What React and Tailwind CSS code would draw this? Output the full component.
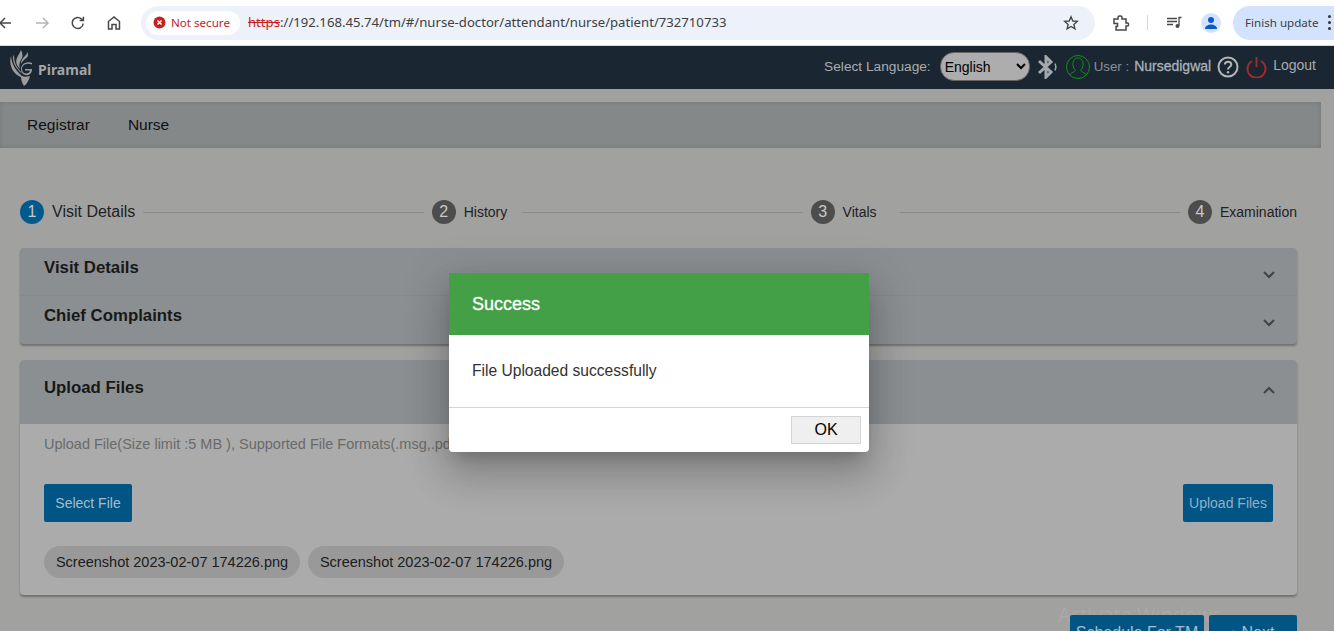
import React from "react";

const sans = "font-['Liberation_Sans',Arial,sans-serif]";

function Chevron({ up }) {
  return (
    <svg width="14" height="10" viewBox="0 0 14 10" fill="none" stroke="#424446" strokeWidth="2">
      <path d={up ? "M2 8l5-5 5 5" : "M2 2l5 5 5-5"} />
    </svg>
  );
}

function Step({ n, active, label, labelClass }) {
  return (
    <>
      <span className={`flex h-6 w-6 shrink-0 items-center justify-center rounded-full text-base text-[#c9c9c9] ${active ? "bg-[#005a8e]" : "bg-[#4d4d4d]"}`}>{n}</span>
      <span className={`ml-2 shrink-0 text-[#222] ${labelClass}`}>{label}</span>
    </>
  );
}

function Line({ className }) {
  return <span className={`h-px flex-1 bg-[#8a8a89] ${className}`} />;
}

function BrowserBar() {
  return (
    <div className="flex h-[45px] items-center bg-white">
      <svg className="ml-[-2px]" width="16" height="16" viewBox="0 0 16 16" fill="none" stroke="#474747" strokeWidth="1.5"><path d="M13 8H2M7 3L2 8l5 5" /></svg>
      <svg className="ml-[20px]" width="16" height="16" viewBox="0 0 16 16" fill="none" stroke="#b4b4b4" strokeWidth="1.5"><path d="M2 8h11M9 3l5 5-5 5" /></svg>
      <svg className="ml-[20px]" width="16" height="16" viewBox="0 0 16 16" fill="none" stroke="#474747" strokeWidth="1.5"><path d="M13.2 8.5A5.5 5.5 0 1 1 11.6 4L13.4 5.6M13.4 1.8v3.8H9.6" /></svg>
      <svg className="ml-[20px]" width="16" height="16" viewBox="0 0 16 16" fill="none" stroke="#474747" strokeWidth="1.5"><path d="M2.5 14V6.5L8 2l5.5 4.500V14h-3.500V9.500h-4V14z" /></svg>
      <div className="ml-[19px] flex h-[34px] w-[954px] items-center rounded-full bg-[#edf2fa] pl-[5px] pr-[16px]">
        <div className="flex h-6 w-[94px] items-center rounded-full bg-white pl-[7px] font-['Noto_Sans',sans-serif] text-[11.6px] text-[#c5221f]">
          <svg width="13" height="13" viewBox="0 0 13 13"><circle cx="6.500" cy="6.500" r="6" fill="#c5221f" /><path d="M4.500 4.500l4 4m0-4l-4 4" stroke="#fff" strokeWidth="1.500" /></svg>
          <span className="ml-[5px]">Not secure</span>
        </div>
        <div className="ml-[8px] flex-1 font-['Noto_Sans',sans-serif] text-[13.15px] text-[#3c4043]">
          <span className="text-[#c5221f] line-through">https</span>://192.168.45.74/tm/#/nurse-doctor/attendant/nurse/patient/732710733
        </div>
        <svg width="16" height="16" viewBox="0 0 16 16" fill="none" stroke="#474747" strokeWidth="1.400"><path d="M8 1.800l1.800 4.200 4.500.4-3.400 3 1 4.400L8 11.500 4.100 13.800l1-4.400-3.400-3 4.500-.4z" /></svg>
      </div>
      <svg className="ml-[17px]" width="18" height="18" viewBox="0 0 18 18" fill="none" stroke="#474747" strokeWidth="1.500"><path d="M2 5h4V3.500a1.500 1.500 0 0 1 1.500-1.500h1a1.500 1.500 0 0 1 1.500 1.500V5h4v4h1.500a1 1 0 0 1 1 1v1a1 1 0 0 1-1 1H14v4H4v-3.500h1.500v-3H2z" /></svg>
      <span className="ml-[17px] h-[15px] w-px bg-[#c7d7ee]" />
      <svg className="ml-[19px]" width="16" height="14" viewBox="0 0 16 14" fill="none" stroke="#474747" strokeWidth="1.300"><path d="M0 2.500h10M0 5.500h10M0 8.500h6M14.500 1.500h-2.500v8" /><circle cx="10.500" cy="10" r="2" fill="#474747" stroke="none" /></svg>
      <div className="ml-[18px] flex h-5 w-5 items-center justify-center rounded-full bg-[#d3e3fd]">
        <svg width="14" height="14" viewBox="0 0 14 14" fill="#0b57d0"><circle cx="7" cy="4" r="3" /><path d="M1 13c0-3 3-4.500 6-4.500s6 1.500 6 4.500z" /></svg>
      </div>
      <div className="ml-[12px] flex h-[34px] flex-1 items-center whitespace-nowrap rounded-l-full bg-[#d3e3fd] pl-[12px] font-['Noto_Sans',sans-serif] text-[11.6px] text-[#3c4043]">
        Finish update
        <span className="ml-[9px] flex flex-col gap-[3px]">
          <span className="h-[3px] w-[3px] rounded-full bg-[#333]" />
          <span className="h-[3px] w-[3px] rounded-full bg-[#333]" />
          <span className="h-[3px] w-[3px] rounded-full bg-[#333]" />
        </span>
      </div>
    </div>
  );
}

function Header() {
  return (
    <div className={`flex h-[43px] items-center bg-[#1a2631] ${sans}`}>
      <svg className="ml-[10px]" width="24" height="38" viewBox="0 0 24 38" fill="#9b9c9c">
        <path d="M11 1c2 4 2 7 0 10-2 3-2 6-1 9-3-3-5-7-3-11 1-3 3-5 4-8z" />
        <path d="M1 7c1 9 5 15 11 20 2 1 3 2 3 2-7-1-12-5-14-12-1-3-1-7 0-10z" />
        <path d="M4 6c0 8 3 13 8 18-1 0-2-1-3-2-4-4-6-9-6-13 0-1 0-2 1-3z" />
        <path d="M17 3c2 3 1 5-2 7-2 2-3 3-4 5 0-4 2-6 4-8 1-1 2-2 2-4z" />
        <path d="M22 14c-5-2-11 1-11 6 0 5 5 8 9 5 1-1 2-2 2-5h-7v1.500h5c0 2-2 3-4 3-3 0-4-3-4-5 0-3 4-6 10-4z" />
        <path d="M11 27c3 1 6 1 9 0-1 4-3 8-6 10-2-3-3-6-3-10z" />
      </svg>
      <span className="ml-[4px] mt-[4px] font-['Noto_Sans',sans-serif] text-[14px] font-bold text-[#a3a5a6]">Piramal</span>
      <span className="ml-auto mb-[1px] text-[13.7px] text-[#a9acad]">Select Language:</span>
      <select defaultValue="English" className="ml-[9px] mb-[2px] h-[29px] w-[90px] rounded-[14px] border border-[#666] bg-[#adadad] text-[14px] text-black">
        <option>English</option>
      </select>
      <svg className="ml-[7px] mb-[2px]" width="22" height="24" viewBox="0 0 22 24" fill="none" stroke="#a3a8ad" strokeWidth="3">
        <path d="M2 6l12 11-5 5V2l5 5L2 18" />
        <path d="M18 8.500c1 2 1 5 0 7" strokeWidth="1.400" />
      </svg>
      <svg className="ml-[7px] mb-[2px]" width="24" height="24" viewBox="0 0 24 24" fill="none" stroke="#119411" strokeWidth="1">
        <circle cx="12" cy="12" r="11.500" />
        <path d="M3.500 20c2-3 5-2.500 6-4.500-2-2-3-5-2.500-8C8 4 10 3 12 3s4 1 5 4.500c.5 3-.5 6-2.500 8 1 2 4 1.500 6 4.500" />
      </svg>
      <span className="ml-[4px] mb-[2px] text-[13.3px] text-[#8d9296]">User :</span>
      <span className="ml-[5px] mb-[2px] text-[14px] text-[#a9b2bb] [-webkit-text-stroke:0.3px_#a9b2bb]">Nursedigwal</span>
      <svg className="ml-[6px] mb-[1px]" width="22" height="22" viewBox="0 0 22 22" fill="none" stroke="#b3b5b7" strokeWidth="2">
        <circle cx="11" cy="11" r="9.500" />
        <path d="M7.800 8.500C8 6.500 9.500 5.800 11 5.800c2 0 3.300 1.200 3.300 2.800 0 2.400-3.300 2.400-3.300 4.800" />
        <circle cx="11" cy="16.200" r="1.200" fill="#b3b5b7" stroke="none" />
      </svg>
      <svg className="ml-[7px]" width="21" height="21" viewBox="0 0 21 21" fill="none" stroke="#a12a2a" strokeWidth="2">
        <path d="M6 4a9 9 0 1 0 9 0M10.500 0v10" />
      </svg>
      <span className="ml-[6px] mr-[18px] mb-[5px] text-[14px] text-[#a9acad]">Logout</span>
    </div>
  );
}

function Dialog() {
  return (
    <div className={`absolute left-[449px] top-[273px] w-[420px] overflow-hidden rounded-b-[4px] bg-white shadow-[0_11px_15px_-7px_rgba(0,0,0,0.2),0_24px_38px_3px_rgba(0,0,0,0.14),0_9px_46px_8px_rgba(0,0,0,0.12)] ${sans}`}>
      <div className="flex h-[62px] items-center bg-[#43a047] pl-[23px] text-[18px] text-white [-webkit-text-stroke:0.3px_white]">Success</div>
      <div className="flex h-[72px] items-center pl-[23px] text-[15.6px] text-[#333]">File Uploaded successfully</div>
      <div className="flex h-[45px] justify-end border-t border-[#d4d4d4] pr-2 pt-2">
        <button className="h-[28px] w-[70px] border border-[#d4d4d4] bg-[#efefef] text-[16px] text-black">OK</button>
      </div>
    </div>
  );
}

export default function App() {
  return (
    <div className={`relative h-[631px] w-[1334px] overflow-hidden bg-[#a1a1a0] ${sans}`}>
      <div className="border-b border-[#dcdcdc]">
        <BrowserBar />
      </div>
      <Header />

      <div className="mt-[13px] mr-[13px] flex h-[46px] items-center bg-[#858889] pl-[27px] text-[15.5px] text-[#111] shadow-[inset_0_0_4px_rgba(0,0,0,0.15)]">
        <span>Registrar</span>
        <span className="ml-[38px]">Nurse</span>
      </div>

      <div className="mx-5 mt-[52px] w-[1277px]">
        <div className="flex h-6 items-center">
          <Step n="1" active label="Visit Details" labelClass="text-[16px]" />
          <Line className="ml-2 mr-2" />
          <Step n="2" label="History" labelClass="text-[14px]" />
          <Line className="ml-[15px] mr-2" />
          <Step n="3" label="Vitals" labelClass="text-[14px]" />
          <Line className="ml-[23px] mr-2" />
          <Step n="4" label="Examination" labelClass="text-[14px]" />
        </div>

        <div className="mt-6 h-[96px] rounded-[4px] bg-[#8c8f92] shadow-[0_2px_2px_rgba(0,0,0,0.3)]">
          <div className="flex h-[48px] items-start justify-between border-b border-[#868a8c] pl-6 pr-[21px] pt-[7px]">
            <span className="text-[16.8px] font-bold text-[#181818]">Visit Details</span>
            <span className="mt-[15px] flex"><Chevron /></span>
          </div>
          <div className="flex h-[48px] items-start justify-between pl-6 pr-[21px] pt-[7px]">
            <span className="text-[16.8px] font-bold text-[#181818]">Chief Complaints</span>
            <span className="mt-[15px] flex"><Chevron /></span>
          </div>
        </div>

        <div className="mt-4 h-[235px] rounded-[4px] bg-[#ababab] shadow-[0_2px_2px_rgba(0,0,0,0.3)]">
          <div className="flex h-[64px] items-start justify-between rounded-t-[4px] bg-[#8c8f92] pl-6 pr-[21px] pt-[15px]">
            <span className="text-[16.8px] font-bold text-[#181818]">Upload Files</span>
            <span className="mt-[10px] flex"><Chevron up /></span>
          </div>
          <div className="px-6">
            <p className="mt-[12px] text-[14.5px] leading-4 text-[#6a6a6a]">Upload File(Size limit :5 MB ), Supported File Formats(.msg,.pdf</p>
            <div className="mt-[32px] flex items-center justify-between pr-0">
              <button className="h-[38px] w-[88px] rounded-[2px] bg-[#005585] text-[14px] text-[#a9bcc8]">Select File</button>
              <button className="h-[38px] w-[90px] rounded-[2px] bg-[#005585] text-[14px] text-[#8fb0c4]">Upload Files</button>
            </div>
            <div className="mt-6 flex gap-2">
              <span className="flex h-8 w-[256px] items-center justify-center rounded-full bg-[#999999] pt-px text-[14.5px] text-[#1c1c1c]">Screenshot 2023-02-07 174226.png</span>
              <span className="flex h-8 w-[256px] items-center justify-center rounded-full bg-[#999999] pt-px text-[14.5px] text-[#1c1c1c]">Screenshot 2023-02-07 174226.png</span>
            </div>
          </div>
        </div>

        <div className="relative z-10 mt-5 flex justify-end gap-[5px]">
          <button className="h-[36px] w-[134px] rounded-t-[2px] bg-[#005585] text-[16px] text-[#a9bcc8]">Schedule For TM</button>
          <button className="h-[36px] w-[88px] rounded-t-[2px] bg-[#005585] text-[16px] text-[#a9bcc8]">› Next</button>
        </div>
      </div>

      <span className="absolute left-[1058px] top-[600px] font-['Open_Sans',sans-serif] text-[20px] text-[#a9a9a8]">Activate Windows</span>
      <Dialog />
    </div>
  );
}
